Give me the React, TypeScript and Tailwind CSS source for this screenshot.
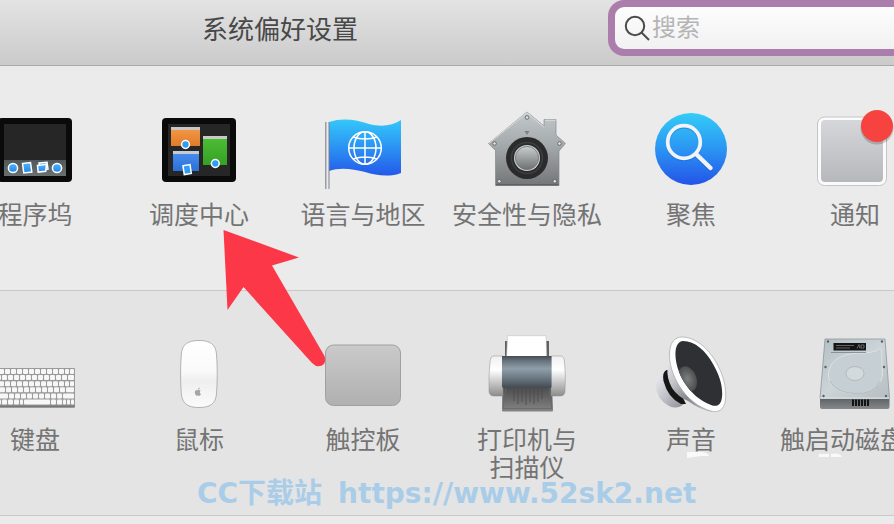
import React from "react"

type Item = {
	label: string[]
	icon: React.ReactNode
	stray?: string
}

const Icon = ({ children }: { children: React.ReactNode }) => (
	<svg
		viewBox="0 0 80 80"
		aria-hidden="true"
		className="w-20 h-20 shrink-0 overflow-visible">
		{children}
	</svg>
)

const DockIcon = () => (
	<Icon>
		<defs>
			<linearGradient id="dockBar" x1="0" y1="0" x2="0" y2="1">
				<stop offset="0" stopColor="#50575a" />
				<stop offset="1" stopColor="#6b706f" />
			</linearGradient>
			<linearGradient id="blueDot" x1="0" y1="0" x2="0" y2="1">
				<stop offset="0" stopColor="#4fb4fa" />
				<stop offset="1" stopColor="#2583ec" />
			</linearGradient>
		</defs>
		<rect x="3" y="9" width="74" height="64" rx="4" fill="#0a0a0a" />
		<rect x="9" y="15" width="62" height="36" fill="#262626" />
		<rect x="9" y="51" width="62" height="16" fill="url(#dockBar)" />
		<g fill="url(#blueDot)" stroke="#fff" strokeWidth="1.5">
			<circle cx="18" cy="59" r="4.6" />
			<path d="M27.5 54.5l8-1 1.3 9.5-8 1z" />
			<path d="M44 54l8-.8 1 7-8 .8z" />
			<path d="M42.5 56.5l9-1.2-.8 7-7.5.8z" />
			<circle cx="62" cy="59" r="4.6" />
		</g>
	</Icon>
)

const MissionIcon = () => (
	<Icon>
		<defs>
			<linearGradient id="mcOrange" x1="0" y1="0" x2="0" y2="1">
				<stop offset="0" stopColor="#f59c4a" />
				<stop offset="1" stopColor="#e07a28" />
			</linearGradient>
			<linearGradient id="mcBlue" x1="0" y1="0" x2="0" y2="1">
				<stop offset="0" stopColor="#4a90ee" />
				<stop offset="1" stopColor="#2b6fd8" />
			</linearGradient>
			<linearGradient id="mcGreen" x1="0" y1="0" x2="0" y2="1">
				<stop offset="0" stopColor="#4fbf37" />
				<stop offset="1" stopColor="#35a023" />
			</linearGradient>
		</defs>
		<rect x="3" y="9" width="74" height="64" rx="4" fill="#0a0a0a" />
		<rect x="9" y="15" width="62" height="52" fill="#262626" />
		<rect x="12" y="18" width="29" height="19" fill="url(#mcOrange)" />
		<rect x="12" y="18" width="29" height="3" fill="#cdc5c2" />
		<rect x="14" y="42" width="26" height="20" fill="url(#mcBlue)" />
		<rect x="14" y="42" width="26" height="3" fill="#c6cad2" />
		<rect x="44" y="27" width="24" height="29" fill="url(#mcGreen)" />
		<rect x="44" y="27" width="24" height="3" fill="#c6cbc5" />
		<g fill="#319cf2" stroke="#fff" strokeWidth="1.5">
			<circle cx="26.5" cy="35.5" r="3.9" />
			<circle cx="56.3" cy="54.5" r="3.9" />
			<path d="M24 56.8l7-1.2 1.3 8.8-7 1.2z" />
		</g>
	</Icon>
)

const FlagIcon = () => (
	<Icon>
		<defs>
			<linearGradient id="flagBlue" x1="0" y1="0" x2="0" y2="1">
				<stop offset="0" stopColor="#34c8f9" />
				<stop offset=".5" stopColor="#2b93f3" />
				<stop offset="1" stopColor="#2458ea" />
			</linearGradient>
			<linearGradient id="flagPole" x1="0" y1="0" x2="1" y2="0">
				<stop offset="0" stopColor="#777b85" />
				<stop offset=".5" stopColor="#f2f3f6" />
				<stop offset="1" stopColor="#7d818c" />
			</linearGradient>
		</defs>
		<path
			d="M6 13C20 8 34 11 46 15C58 18 69 17 78 11V64C68 68 54 67 42 63C30 60 17 58 6 62z"
			fill="url(#flagBlue)"
		/>
		<rect x="2.2" y="13" width="4.3" height="67" fill="url(#flagPole)" />
		<g fill="none" stroke="#fff" strokeWidth="1.5">
			<circle cx="42" cy="39" r="16.3" />
			<ellipse cx="42" cy="39" rx="11" ry="16.3" />
			<path d="M26 39h32M42 22.7v32.6M30 28q12 4 24 0M30 50q12-4 24 0" />
		</g>
	</Icon>
)

const HouseIcon = () => (
	<Icon>
		<defs>
			<linearGradient id="steel" x1="0" y1="0" x2="0" y2="1">
				<stop offset="0" stopColor="#c3c8ca" />
				<stop offset=".45" stopColor="#a4a9ab" />
				<stop offset="1" stopColor="#747677" />
			</linearGradient>
			<linearGradient id="knob" x1="0" y1="0" x2="0" y2="1">
				<stop offset="0" stopColor="#c9cdce" />
				<stop offset="1" stopColor="#6e7172" />
			</linearGradient>
		</defs>
		<path
			d="M40 3L57 17V10.500H69V26L78.500 34.500L72 42V76.500H8.500V41.500L1.500 34.500z"
			fill="url(#steel)"
			stroke="#858a8c"
			strokeWidth=".7"
		/>
		<path d="M2 34.300L40 3.800L57 18M58 11.200h10.500" fill="none" stroke="#e4e7e8" strokeWidth=".8" />
		<path d="M9 75.900h62.500" stroke="#555" strokeWidth="1" />
		<path d="M37.500 22h5l-2.500 4z" fill="#7c8082" />
		<circle cx="40" cy="49" r="21" fill="#2b2b2c" />
		<circle cx="40" cy="49" r="15.500" fill="none" stroke="#3d3f40" strokeWidth="1.500" />
		<circle cx="40" cy="49" r="13" fill="#caced0" />
		<circle cx="40" cy="49" r="11.600" fill="url(#knob)" stroke="#6f7375" strokeWidth=".8" />
		<g fill="#e1e4e5" stroke="#5e6263" strokeWidth=".9">
			<circle cx="40" cy="8.500" r="1.800" />
			<circle cx="7.500" cy="34.500" r="1.800" />
			<circle cx="72.500" cy="34.500" r="1.800" />
			<circle cx="12.300" cy="72.300" r="1.800" />
			<circle cx="67.800" cy="72.300" r="1.800" />
		</g>
	</Icon>
)

const SpotlightIcon = () => (
	<Icon>
		<defs>
			<linearGradient id="spot" x1="0" y1="0" x2="0" y2="1">
				<stop offset="0" stopColor="#33ccf8" />
				<stop offset=".5" stopColor="#2b95f3" />
				<stop offset="1" stopColor="#2353e8" />
			</linearGradient>
		</defs>
		<circle cx="40" cy="40" r="36" fill="url(#spot)" />
		<g fill="none" stroke="#1c5cc4" strokeOpacity=".4" strokeWidth="4">
			<circle cx="33" cy="34" r="16.300" />
			<path d="M45 46l14.500 14" strokeWidth="5" strokeLinecap="round" />
		</g>
		<g fill="none" stroke="#f0f3f7">
			<circle cx="33" cy="33" r="16.300" strokeWidth="3.800" />
			<path d="M45 45l14.500 14" strokeWidth="4.500" strokeLinecap="round" />
		</g>
	</Icon>
)

const NoticeIcon = () => (
	<Icon>
		<defs>
			<linearGradient id="notice" x1="0" y1="0" x2="0" y2="1">
				<stop offset="0" stopColor="#d6d7da" />
				<stop offset="1" stopColor="#b7b8bc" />
			</linearGradient>
		</defs>
		<rect x="2.500" y="8" width="69" height="68.500" rx="7" fill="#fbfbfb" stroke="#c4c4c4" />
		<rect x="6" y="11" width="62" height="62" rx="4" fill="url(#notice)" />
		<circle cx="62" cy="19" r="16.500" fill="#000" fillOpacity=".18" />
		<circle cx="62" cy="17" r="16" fill="#f74340" />
	</Icon>
)

const keyRows = [
	[9, 6, 6, 6, 6, 6, 6, 6, 6, 6, 6, 5, 5],
	[6, 6, 6, 6, 6, 6, 6, 6, 6, 6, 6, 6, 7],
	[9, 6, 6, 6, 6, 6, 6, 6, 6, 6, 6, 5, 5],
	[10, 6, 6, 6, 6, 6, 6, 6, 6, 6, 6, 9],
	[13, 6, 6, 6, 6, 6, 6, 6, 6, 6, 12],
	[6, 6, 6, 6, 4, 27, 6, 6, 4, 4, 4],
]

const KeyboardIcon = () => (
	<Icon>
		<rect x="0" y="34" width="80" height="39.500" rx="1" fill="#9a9a9a" />
		<rect x="0" y="71.500" width="80" height="2" rx="1" fill="#767676" />
		{keyRows.map((row, r) => {
			let x = 0.5
			return row.map((w, i) => {
				const left = x
				x += w
				return (
					<rect
						key={`${r}-${i}`}
						x={left + 0.5}
						y={35 + r * 6.1}
						width={w - 1}
						height="5"
						rx="1"
						fill="#f7f7f7"
					/>
				)
			})
		})}
	</Icon>
)

const MouseIcon = () => (
	<Icon>
		<defs>
			<linearGradient id="mouse" x1="0" y1="0" x2="0" y2="1">
				<stop offset="0" stopColor="#fff" />
				<stop offset=".45" stopColor="#fafafa" />
				<stop offset=".6" stopColor="#efeff0" />
				<stop offset="1" stopColor="#fbfbfb" />
			</linearGradient>
		</defs>
		<path
			d="M40 6.500C51 6.500 56.500 10 57.500 20C58.500 33 58.500 47 57.500 60C56.500 70 51 73.500 40 73.500S23.500 70 22.300 60C21.300 47 21.300 33 22.300 20C23.300 10 29 6.500 40 6.500z"
			fill="url(#mouse)"
			stroke="#ababab"
			strokeWidth=".9"
		/>
		<path
			d="M39 56.300c1-.6 2-.6 2.700.3-1.200 1-1.100 2.600.2 3.300-.6 1.600-1.600 2.300-2.900 1.700-1.700.7-3.200-1-3.200-3 0-2.200 1.600-3.200 3.200-2.300zM39 55.700c0-1.300.7-2 1.700-2.200 0 1.300-.7 2.100-1.700 2.200z"
			fill="#a5a5a5"
		/>
	</Icon>
)

const TrackpadIcon = () => (
	<Icon>
		<defs>
			<linearGradient id="pad" x1="0" y1="0" x2="0" y2="1">
				<stop offset="0" stopColor="#cacaca" />
				<stop offset="1" stopColor="#b0b0b0" />
			</linearGradient>
		</defs>
		<rect x="2.500" y="11" width="75" height="60.500" rx="8" fill="url(#pad)" stroke="#a0a0a0" />
	</Icon>
)

const PrinterIcon = () => (
	<Icon>
		<defs>
			<linearGradient id="prBody" x1="0" y1="0" x2="0" y2="1">
				<stop offset="0" stopColor="#444c53" />
				<stop offset=".15" stopColor="#66737d" />
				<stop offset=".4" stopColor="#8f9faa" />
				<stop offset=".7" stopColor="#6b7882" />
				<stop offset="1" stopColor="#444c53" />
			</linearGradient>
			<linearGradient id="prSide" x1="0" y1="0" x2="0" y2="1">
				<stop offset="0" stopColor="#f0f0f0" />
				<stop offset=".35" stopColor="#fff" />
				<stop offset=".65" stopColor="#c9c9c9" />
				<stop offset="1" stopColor="#8b8b8b" />
			</linearGradient>
			<linearGradient id="prTray" x1="0" y1="0" x2="0" y2="1">
				<stop offset="0" stopColor="#4b4b4b" />
				<stop offset="1" stopColor="#858585" />
			</linearGradient>
		</defs>
		<path d="M18 7h3v16h-3zM59 7h3v16h-3z" fill="#606060" />
		<path d="M20.500 1.700h38.500l.7 21h-40z" fill="#fff" stroke="#c2c2c2" strokeWidth=".6" />
		<path d="M15.500 53H65l1 23.500q0 1-1 1H16q-1 0-1-1z" fill="url(#prTray)" />
		<path d="M19 54L16 74.500h49L62 54" fill="none" stroke="#666" strokeWidth=".8" />
		<path
			d="M27 56v11M31 56v14M35 56v12M39 56v15M43 56v12M47 56v14M51 56v12M55 56v9"
			stroke="#4a4a4a"
			strokeWidth=".8"
		/>
		<path d="M6 22h10v40H7q-5 0-5-5Q1.500 42 3 28Q3.500 22 6 22z" fill="url(#prSide)" stroke="#8c8c8c" strokeWidth=".5" />
		<path d="M74 22H64v40h9q5 0 5-5Q79 42 77.500 28Q77 22 74 22z" fill="url(#prSide)" stroke="#8c8c8c" strokeWidth=".5" />
		<path d="M15 22h49.500v31.500H15z" fill="url(#prBody)" />
	</Icon>
)

const SpeakerIcon = () => (
	<Icon>
		<defs>
			<linearGradient id="cone" x1="0" y1="0" x2="1" y2="1">
				<stop offset="0" stopColor="#f2f2f4" />
				<stop offset=".3" stopColor="#c6c6cc" />
				<stop offset=".6" stopColor="#85858d" />
				<stop offset="1" stopColor="#c4c4c8" />
			</linearGradient>
			<linearGradient id="magnet" x1="0" y1="0" x2="1" y2="1">
				<stop offset="0" stopColor="#f0f0f4" />
				<stop offset=".5" stopColor="#c2c2ca" />
				<stop offset="1" stopColor="#8d8d95" />
			</linearGradient>
			<radialGradient id="dome">
				<stop offset="0" stopColor="#7d7f80" />
				<stop offset="1" stopColor="#4b4d4f" />
			</radialGradient>
			<clipPath id="mouth">
				<path d="M32 7C44 7 55 17 62 30C69 42 72 53 71 63C70 72 65 73 60 71C49 67 40 59 33 48C27 38 24 27 24.500 18C25 11 28 7 32 7z" />
			</clipPath>
		</defs>
		<path d="M14 38.500Q4 42 4.500 51Q6 66 18 72Q26 76 33 70z" fill="url(#magnet)" />
		<path d="M15.500 36Q11 38 12.500 47Q17 64 30 70H35L30 60L18 36z" fill="#161617" />
		<path d="M18.500 19Q18.500 28 16.500 34Q15.500 44 21 54Q27 63 37 67Q49 76 62 78z" fill="url(#cone)" />
		<path
			d="M31 3C44 3 57 14 65 28C72 40 76 54 74.500 66C73 77 66 79 60 77C48 74 36 64 29 53C22 42 18 30 18.500 19C19 8 24 3 31 3z"
			fill="#fdfdfd"
			stroke="#a8a8ac"
			strokeWidth=".7"
		/>
		<g clipPath="url(#mouth)">
			<rect width="80" height="80" fill="#2e3033" />
			<ellipse cx="36.500" cy="45" rx="9" ry="13" transform="rotate(-20 36.500 45)" fill="url(#dome)" />
		</g>
	</Icon>
)

const DiskIcon = () => (
	<Icon>
		<defs>
			<linearGradient id="disk" x1="0" y1="0" x2="1" y2="1">
				<stop offset="0" stopColor="#b3bfc5" />
				<stop offset=".5" stopColor="#ccd4d8" />
				<stop offset="1" stopColor="#b5bdc0" />
			</linearGradient>
			<linearGradient id="diskFront" x1="0" y1="0" x2="0" y2="1">
				<stop offset="0" stopColor="#5c6062" />
				<stop offset="1" stopColor="#85898b" />
			</linearGradient>
		</defs>
		<path d="M5 64h69.500v9q0 2-2 2H7q-2 0-2-2z" fill="url(#diskFront)" />
		<path d="M10 5h60l4.500 59.500H5z" fill="url(#disk)" stroke="#8d979b" strokeWidth=".8" />
		<path d="M5.300 64.200h69" stroke="#eef1f2" strokeWidth="1" />
		<path
			d="M13.500 40C14 28 25 20 40 19.500C54 19 61 18 65 14.500Q66.500 14 66.500 17L67.500 40C67 52 55 59.500 40 59.500C24 59.500 13.500 52 13.500 40z"
			fill="#c6cfd3"
			stroke="#dde3e5"
			strokeWidth="1"
		/>
		<path d="M15 47q6 12 25 12.500t25-12" fill="none" stroke="#a3adb2" strokeWidth=".7" />
		<ellipse cx="40" cy="39.500" rx="9" ry="7" fill="#d3dadd" stroke="#a9b4b8" strokeWidth=".8" />
		<path d="M16 18.500h35" stroke="#7b8589" strokeWidth=".8" />
		<rect x="18.500" y="9" width="32.500" height="7.500" fill="#151515" />
		<path d="M21 11.500h18M21 14h14M42 14.500l2-4 1 4M46 11h3v3h-3z" stroke="#888" strokeWidth=".7" fill="none" />
		<path d="M38 65.500v6.500M41 65.500v6.500M44 65.500v6.500M47 65.500v6.500M50 65.500v6.500M53 65.500v6.500" stroke="#0e0e0e" strokeWidth="1.900" />
		<g fill="#54626a">
			<circle cx="13" cy="7.500" r="1.200" />
			<circle cx="67" cy="7.500" r="1.200" />
			<circle cx="10.500" cy="33" r="1.200" />
			<circle cx="69" cy="33" r="1.200" />
			<circle cx="8.500" cy="62" r="1.200" />
			<circle cx="71" cy="62" r="1.200" />
		</g>
	</Icon>
)

const personal: Item[] = [
	{ label: ["程序坞"], icon: <DockIcon /> },
	{ label: ["调度中心"], icon: <MissionIcon /> },
	{ label: ["语言与地区"], icon: <FlagIcon /> },
	{ label: ["安全性与隐私"], icon: <HouseIcon /> },
	{ label: ["聚焦"], icon: <SpotlightIcon /> },
	{ label: ["通知"], icon: <NoticeIcon /> },
]

const hardware: Item[] = [
	{ label: ["键盘"], icon: <KeyboardIcon /> },
	{ label: ["鼠标"], icon: <MouseIcon /> },
	{ label: ["触控板"], icon: <TrackpadIcon /> },
	{ label: ["打印机与", "扫描仪"], icon: <PrinterIcon /> },
	{ label: ["声音"], icon: <SpeakerIcon /> },
	{ label: ["启动磁盘"], icon: <DiskIcon />, stray: "触" },
]

const PaneRow = ({ items, className }: { items: Item[]; className: string }) => (
	<section className={className}>
		<div className="-ml-[47px] -mr-[43px] grid grid-cols-6">
			{items.map((item) => (
				<button
					key={item.label[0]}
					type="button"
					className="flex flex-col items-center gap-2.5 text-[25px] leading-7 text-[#747474]">
					{item.icon}
					<span className="relative whitespace-nowrap">
						{item.stray && (
							<span className="absolute right-full top-0">{item.stray}</span>
						)}
						{item.label.map((line) => (
							<span key={line} className="block">
								{line}
							</span>
						))}
					</span>
				</button>
			))}
		</div>
	</section>
)

const App = () => {
	return (
		<div className="relative min-h-screen overflow-hidden bg-[#ebebeb] font-['Noto_Sans_CJK_SC',sans-serif]">
			<header className="flex h-[66px] items-start justify-between border-b border-[#a9a9a9] bg-linear-to-b from-[#e3e3e3] to-[#cbcbcb] pl-[202px]">
				<h1 className="pt-3 text-[26px] leading-8 text-[#484848]">系统偏好设置</h1>
				<label className="flex h-14 w-[286px] items-center rounded-l-2xl border-y-[7px] border-l-[7px] border-[#ab7dac] bg-linear-to-b from-[#fdfdfd] to-[#f1f1f1] bg-clip-padding pl-2">
					<svg viewBox="0 0 28 28" aria-hidden="true" className="h-7 w-7 shrink-0">
						<g fill="none" stroke="#4a4a4a" strokeWidth="2">
							<circle cx="12" cy="12" r="9.200" />
							<path d="M18.500 18.500l7.500 7.500" />
						</g>
					</svg>
					<input
						type="text"
						aria-label="搜索"
						placeholder="搜索"
						className="mb-1 h-8 w-full min-w-0 bg-transparent pl-px text-2xl leading-8 text-[#484848] outline-none placeholder:text-[#b4b4b4]"
					/>
				</label>
			</header>

			<PaneRow
				items={personal}
				className="min-h-[225px] border-b border-[#c9c9c9] pt-[43px]"
			/>
			<PaneRow
				items={hardware}
				className="min-h-[225px] border-b border-[#c9c9c9] bg-[#e4e4e4] pt-[43px]"
			/>

			{/* pointer towards Mission Control */}
			<svg
				viewBox="0 0 108 142"
				aria-hidden="true"
				className="pointer-events-none absolute left-[220px] top-[228px] h-[142px] w-[108px]">
				<path
					d="M3.500 2L79 29.500L52 37.500L104.500 128Q106 133 104 136Q101 139 96 138L92 135L23.500 59L7.500 82z"
					fill="#fc3848"
				/>
			</svg>

			<svg
				viewBox="0 0 156 6"
				aria-hidden="true"
				className="pointer-events-none absolute left-[687px] top-[452px] h-[6px] w-[156px]">
				<path d="M0 0h16q5 1 6 4h-8l-14 2zM132 2h10v3h-10zM144 2q9-2 11 3h-11z" fill="#f9f9f9" />
			</svg>

			<p className="pointer-events-none absolute left-[197px] top-[476px] flex gap-4 whitespace-nowrap font-['DejaVu_Sans','Noto_Sans_CJK_SC',sans-serif] text-[28px] font-bold leading-9 text-[#a9cde8]">
				<span>CC下载站</span>
				<span>https://www.52sk2.net</span>
			</p>
		</div>
	)
}

export default App
